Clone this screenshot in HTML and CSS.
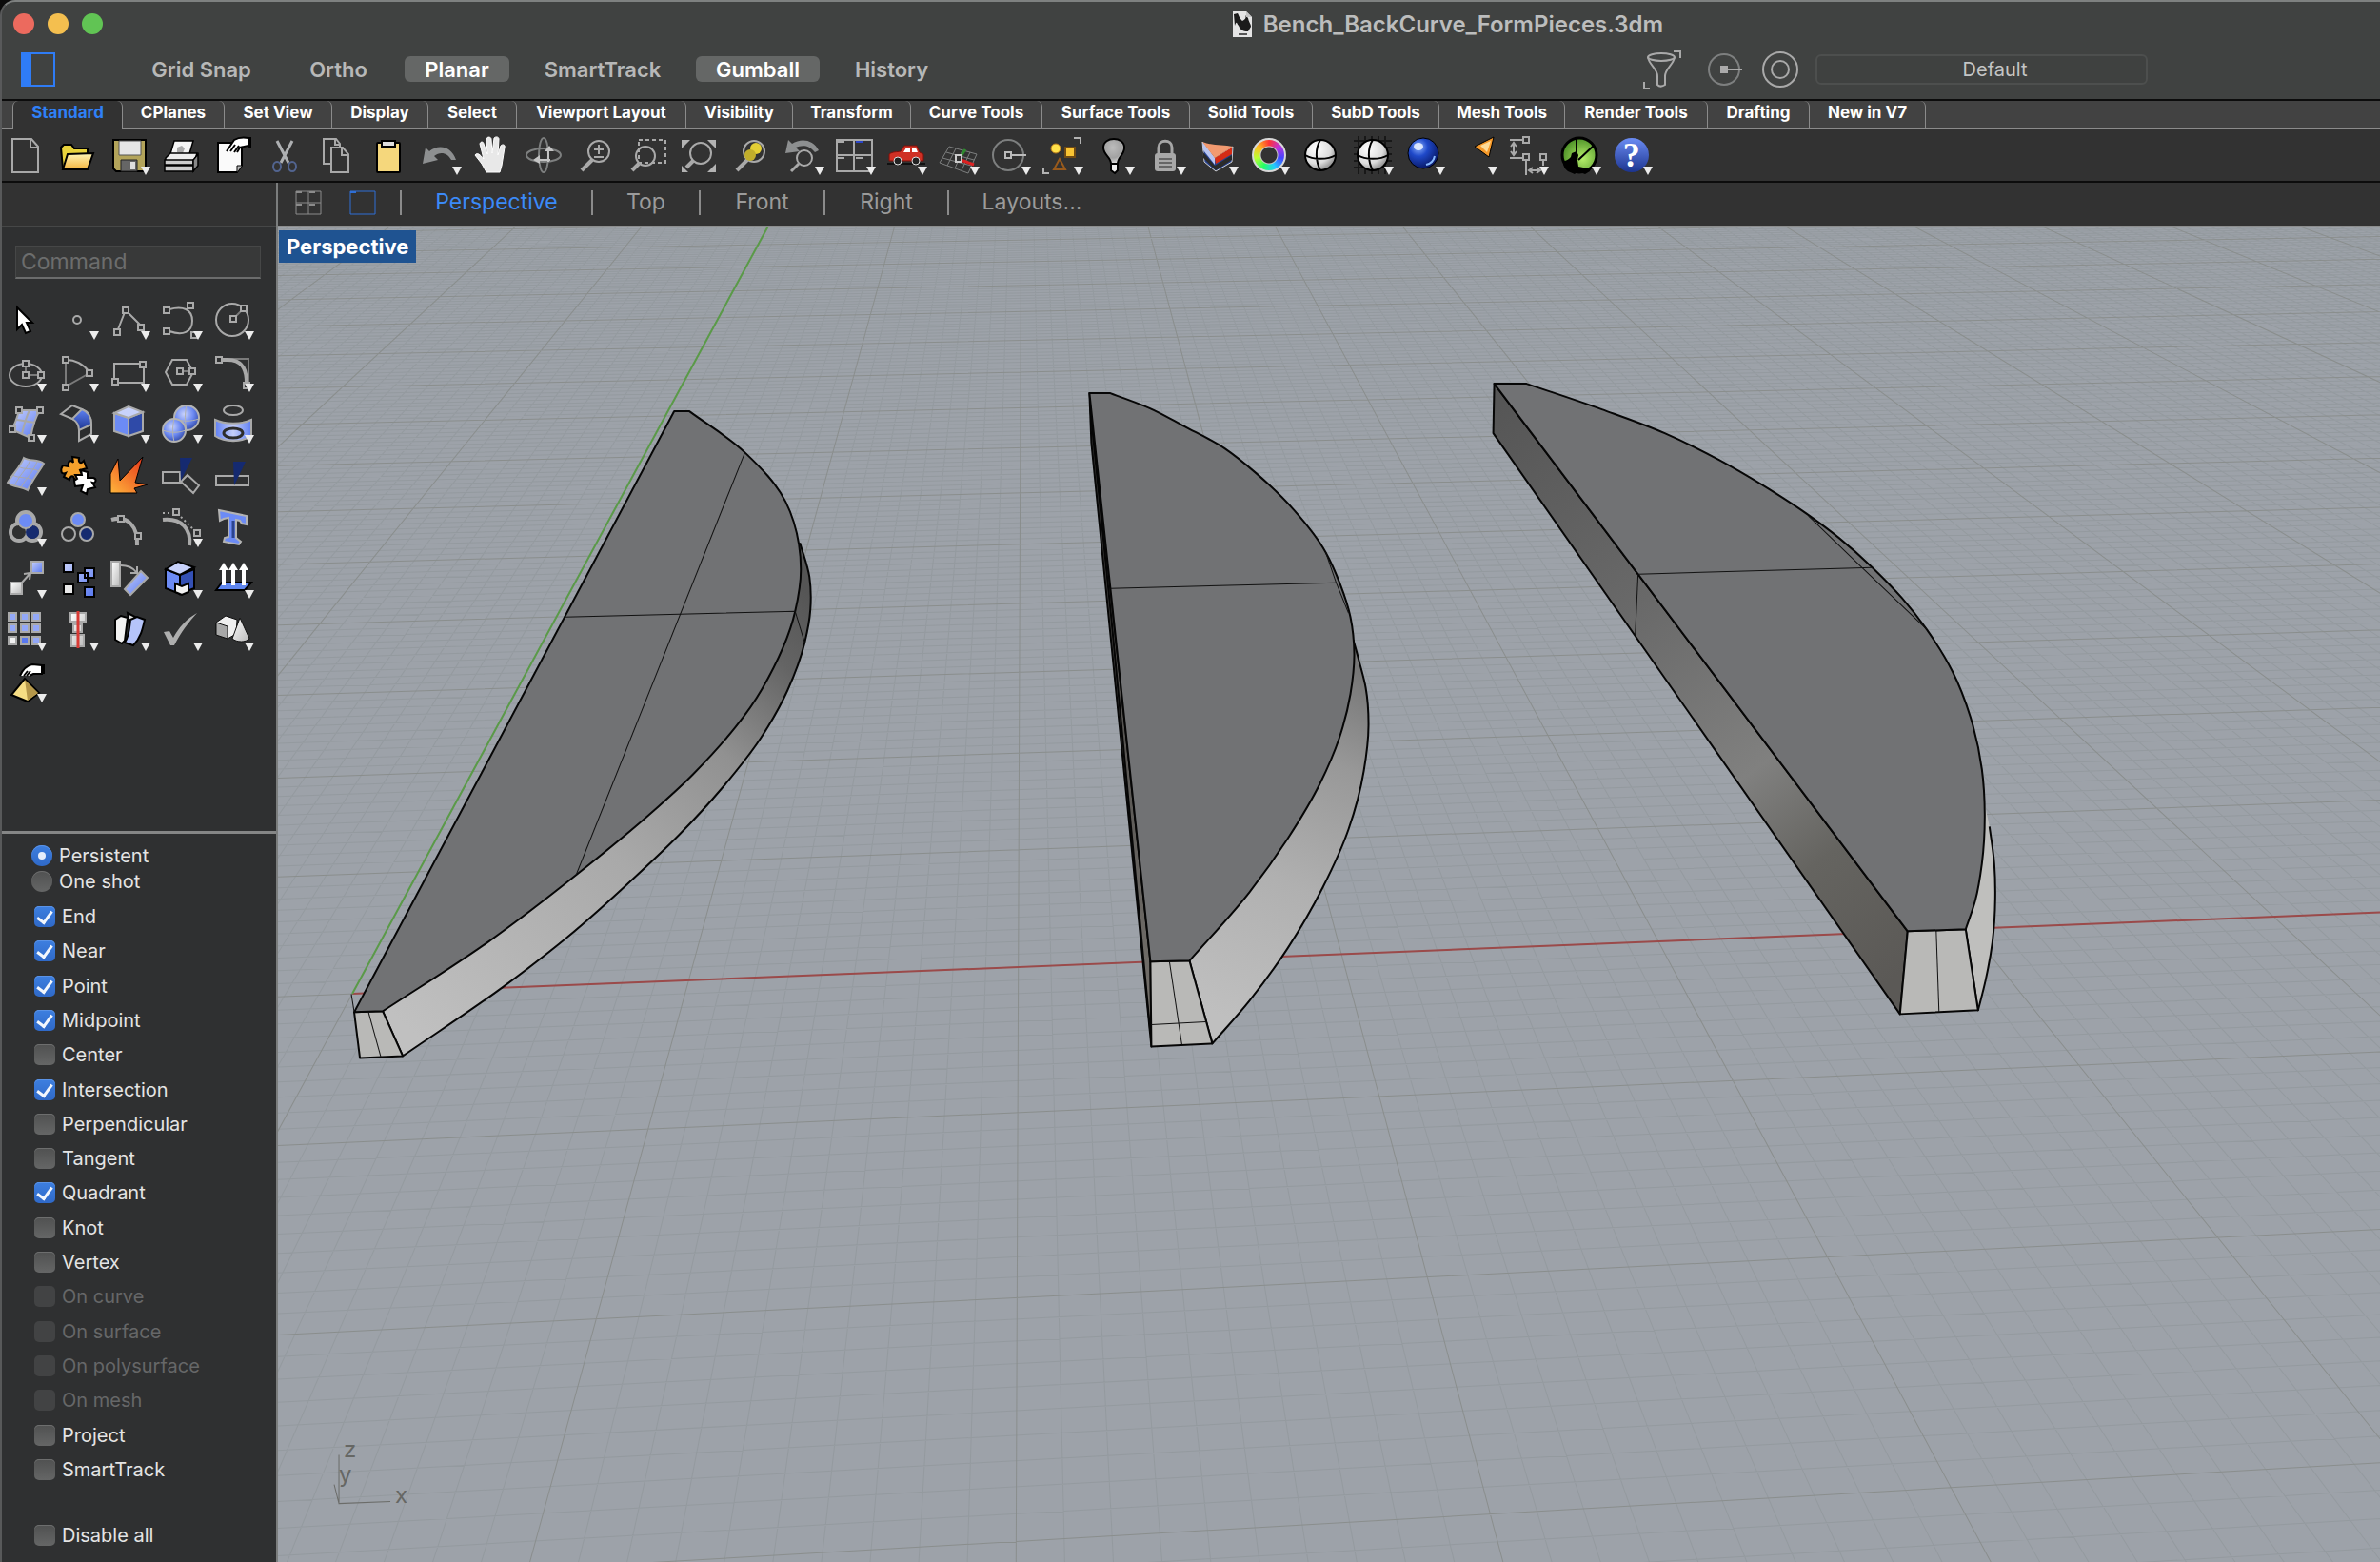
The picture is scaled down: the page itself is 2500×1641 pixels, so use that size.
FILE: index.html
```html
<!DOCTYPE html>
<html lang="en">
<head>
<meta charset="utf-8">
<title>Bench_BackCurve_FormPieces.3dm</title>
<link rel="stylesheet" href="styles.css">
</head>
<body>
<svg class="defs" aria-hidden="true">
  <defs>
    <linearGradient id="blue" x1="0" y1="0" x2="1" y2="1"><stop offset="0" stop-color="#c6d0fb"/><stop offset="1" stop-color="#5878f0"/></linearGradient>
    <linearGradient id="blueDown" x1="0" y1="0" x2="0" y2="1"><stop offset="0" stop-color="#5f82f4"/><stop offset="1" stop-color="#1c348f"/></linearGradient>
    <linearGradient id="blueSide" x1="0" y1="0" x2="1" y2="0"><stop offset="0" stop-color="#5f7ff3"/><stop offset=".5" stop-color="#c4cefa"/><stop offset="1" stop-color="#5f7ff3"/></linearGradient>
    <linearGradient id="metal" x1="0" y1="0" x2="1" y2="1"><stop offset="0" stop-color="#fff"/><stop offset="1" stop-color="#b9b9b9"/></linearGradient>
    <linearGradient id="fire" x1="1" y1="0" x2="0" y2="1"><stop offset="0" stop-color="#e52f18"/><stop offset="1" stop-color="#ffb53c"/></linearGradient>
    <linearGradient id="folder" x1="0" y1="0" x2="0" y2="1"><stop offset="0" stop-color="#fff6b8"/><stop offset="1" stop-color="#f2b33d"/></linearGradient>
    <radialGradient id="ball" cx=".35" cy=".3" r=".8"><stop offset="0" stop-color="#fff"/><stop offset=".6" stop-color="#dcdcdc"/><stop offset="1" stop-color="#777"/></radialGradient>
    <radialGradient id="bulb" cx=".45" cy=".35" r=".7"><stop offset="0" stop-color="#bdbdbd"/><stop offset=".6" stop-color="#a2a2a2"/><stop offset="1" stop-color="#ededed"/></radialGradient>
    <radialGradient id="blueBall" cx=".35" cy=".3" r=".75"><stop offset="0" stop-color="#8fb4ff"/><stop offset=".4" stop-color="#1f49c9"/><stop offset="1" stop-color="#06145e"/></radialGradient>
    <radialGradient id="softBall" cx=".4" cy=".35" r=".75"><stop offset="0" stop-color="#c9d3fc"/><stop offset=".5" stop-color="#6d8af2"/><stop offset="1" stop-color="#243a96"/></radialGradient>
    <radialGradient id="green" cx=".6" cy=".6" r=".6"><stop offset="0" stop-color="#b6ef6b"/><stop offset="1" stop-color="#4f9328"/></radialGradient>
    <g id="lens"><circle cx="23" cy="16" r="11"/><path d="M16 25 5 36" stroke-width="4"/></g>
  </defs>
</svg>

<div class="window">
  <header class="titlebar">
    <div class="lights"><button class="light close" aria-label="Close"></button><button class="light minimise" aria-label="Minimise"></button><button class="light zoom" aria-label="Zoom"></button></div>
    <h1 class="title">
      <svg class="doc" viewBox="0 0 20 27"><path d="M0 0h14l6 6v21H0z" fill="#e4e4e4"/><path d="M1 3l4-1c2 4 2 5 5 8 4-2 4-4 3-6l3 3c1 5 3 6 3 9l-3 5c-6 0-8-2-10-6C4 13 4 9 2 15z" fill="#1b1b1b"/><path d="M14 0v6h6" fill="#c4c4c4"/><path d="M6 24h9" stroke="#555" stroke-width="2"/></svg>
      Bench_BackCurve_FormPieces.3dm
    </h1>
  </header>

  <div class="modes">
    <button class="sidebar-toggle" aria-label="Toggle sidebar"><svg viewBox="0 0 36 36"><path d="M1 1h34v34H1z" fill="none" stroke="#2f7cf6" stroke-width="2"/><path d="M0 0h11v36H0z" fill="#2f7cf6"/></svg></button>
    <div class="mode-list">
      <button>Grid Snap</button><button>Ortho</button><button class="on">Planar</button><button>SmartTrack</button><button class="on">Gumball</button><button>History</button>
    </div>
    <div class="mode-right">
      <button class="filter" aria-label="Selection filter"><svg class="line" viewBox="0 0 42 42"><ellipse cx="20" cy="8" rx="14" ry="4"/><path d="M6 8c1 8 10 12 10 20v9c2 2 5 2 8 0v-9c0-8 9-12 10-20M33 2h7v7M2 34v7h6"/></svg></button>
      <button aria-label="Record history"><svg class="line dim" viewBox="0 0 42 42"><circle cx="20" cy="21" r="16"/><path d="M20 21h19" stroke="#aaa"/><path d="M16 17h8v8h-8z" fill="#aaa" stroke="none"/></svg></button>
      <button aria-label="Gumball alignment"><svg class="line" viewBox="0 0 42 42"><circle cx="21" cy="21" r="18"/><circle cx="21" cy="21" r="9"/></svg></button>
      <select aria-label="Layer"><option>Default</option></select>
    </div>
  </div>

  <nav class="tabs">
    <button class="active">Standard</button><button>CPlanes</button><button>Set View</button><button>Display</button><button>Select</button><button>Viewport Layout</button><button>Visibility</button><button>Transform</button><button>Curve Tools</button><button>Surface Tools</button><button>Solid Tools</button><button>SubD Tools</button><button>Mesh Tools</button><button>Render Tools</button><button>Drafting</button><button>New in V7</button>
  </nav>

  <div class="toolbar">
    <button aria-label="New"><svg class="line" viewBox="0 0 40 40"><path d="M6 3h20l7 8v27H6zM25 3v9h8"/></svg></button>
    <button aria-label="Open"><svg viewBox="0 0 40 40" stroke="#000" stroke-width="2"><path d="M2 12l3-3h8l3 4h14v5l-6 16H4z" fill="#e8d23c"/><path d="M9 19l27-1-6 17H4z" fill="url(#folder)"/></svg></button>
    <button class="m" aria-label="Save"><svg viewBox="0 0 40 40"><path d="M3 4h34v33H6l-3-3z" fill="#b3a45a" stroke="#000" stroke-width="2"/><path d="M9 5h23v15H9z" fill="#e6e6e6" stroke="#555"/><path d="M11 25h17v12H11z" fill="#666" stroke="#222"/><path d="M21 27h5v8h-5z" fill="#ddd"/></svg></button>
    <button aria-label="Print"><svg viewBox="0 0 40 40" stroke="#000" stroke-width="1.5"><path d="M13 5h20l-5 17H8z" fill="#f4f4f4"/><path d="M16 12l5-2 3 3-2 5-6-1z" fill="#aaa" stroke="none"/><path d="M4 23l5-5h28l-3 9H4z" fill="#eee"/><path d="M3 25h30v5H3zM3 31h30v6H3z" fill="#ccc"/><path d="M33 25l5-6v12l-5 6z" fill="#888"/></svg></button>
    <button aria-label="Properties"><svg viewBox="0 0 40 40"><path d="M4 7h25v24l-5 7H4z" fill="#fafafa" stroke="#000" stroke-width="2"/><path d="M24 38v-7h5" fill="#bbb" stroke="#000"/><path d="M13 16l8-12c5-3 9-3 15-2v8l-9 2-3 5" fill="#fff" stroke="#000" stroke-width="2"/><path d="M17 16l5-7M21 17l5-7" stroke="#000" stroke-width="2"/><path d="M35 1h4v11h-4z"/></svg></button>
    <button aria-label="Cut"><svg viewBox="0 0 40 40" fill="none"><path d="M12 5l12 23M28 5L16 28" stroke="#aeb0b2" stroke-width="3"/><g stroke="#52648f" stroke-width="2"><ellipse cx="12" cy="32" rx="4" ry="5"/><ellipse cx="28" cy="32" rx="4" ry="5"/></g></svg></button>
    <button aria-label="Copy"><svg class="line" viewBox="0 0 40 40"><path d="M14 29H6V3h13l4 5v4M18 3v6h5M14 12h12l6 7v19H14zM25 12v8h7"/></svg></button>
    <button aria-label="Paste"><svg viewBox="0 0 40 40" stroke="#000" stroke-width="2"><rect x="8" y="7" width="24" height="31" rx="1" fill="#f5d77c"/><path d="M13 5h14v6H13z" fill="#ddd"/></svg></button>
    <button class="m" aria-label="Undo"><svg viewBox="0 0 40 40"><path d="M2 29l3-17 4 4c9-8 23-6 28 9h-5c-4-8-12-9-18-4l4 4z" fill="#8d8f90"/></svg></button>
    <button aria-label="Pan"><svg viewBox="0 0 40 40"><path d="M14 38L9 29 2 20c2-3 5-1 9 4L7 8c1-3 4-2 4 0l4 11-1-16c1-3 5-2 5 0l1 15 2-16c2-2 5-1 5 1l-1 17 3-10c2-2 5-1 4 2l-3 19-2 7z" fill="#e8e8e8" stroke="#fff"/></svg></button>
    <button aria-label="Rotate view"><svg class="line dim" viewBox="0 0 40 40"><ellipse cx="20" cy="20" rx="5" ry="18"/><ellipse cx="20" cy="20" rx="18" ry="7"/><path d="M25 27V14M14 25h13" stroke="#c4c4c4"/><path d="M21 16l5-6 5 6zM16 20l-7 5 7 4z" fill="#c4c4c4" stroke="none"/></svg></button>
    <button aria-label="Zoom dynamic"><svg class="line" viewBox="0 0 40 40"><use href="#lens"/><path d="M18 14h10M23 9v10M18 22h10"/></svg></button>
    <button aria-label="Zoom window"><svg class="line" viewBox="0 0 40 40"><circle cx="18" cy="21" r="10"/><path d="M11 29l-7 7" stroke-width="4"/><path d="M11 4h28v24H11z" stroke-dasharray="4 3"/></svg></button>
    <button aria-label="Zoom extents"><svg class="line" viewBox="0 0 40 40"><circle cx="22" cy="18" r="11"/><path d="M14 26l-7 7" stroke-width="4"/><path d="M2 4h9l-9 9zM38 4h-9l9 9zM38 38h-9l9-9zM2 38v-7l7 7z" fill="#b3b3b3" stroke="none"/></svg></button>
    <button aria-label="Zoom selected"><svg class="line" viewBox="0 0 40 40"><use href="#lens"/><g fill="#e4cf35" stroke="none"><circle cx="25" cy="13" r="6"/><circle cx="19" cy="20" r="6" fill="#c1ae2b"/></g></svg></button>
    <button class="m" aria-label="Undo view"><svg class="line" viewBox="0 0 40 40"><path d="M2 18L5 4l4 4c9-6 22-5 28 7l-4 2C27 9 19 9 13 12l4 4z" fill="#8d8f90" stroke="none"/><circle cx="22" cy="23" r="8"/><path d="M16 29l-8 8" stroke-width="3"/></svg></button>
    <button class="m" aria-label="Four views"><svg class="line" viewBox="0 0 40 40"><path d="M1 4h37v33H1zM19 4v33M1 20h37" /><path d="M2 6h7M2 23h7M21 23h7" /><path d="M21 6h7" stroke="#2a45c8"/></svg></button>
    <button class="m" aria-label="Named views"><svg viewBox="0 0 40 40"><path d="M0 29h40" stroke="#111" stroke-width="2"/><path d="M2 26v-7c4-3 8-2 12-3l4-6h13l3 7 4 2v7z" fill="#cf3024" stroke="#7b110b"/><path d="M17 17l3-5h4v5zM26 12h4l2 5h-6z" fill="#fff"/><g fill="#222" stroke="#ddd"><circle cx="11" cy="26" r="4"/><circle cx="30" cy="26" r="4"/></g></svg></button>
    <button class="m" aria-label="Set CPlane"><svg class="line dim" viewBox="0 0 40 40"><path d="M10 11l29 8-9 20L0 28zM17 13L8 31M24 15l-8 19M32 17l-9 19M7 17l29 8M3 23l30 8" stroke-width="1"/><path d="M21 23l6-9" stroke="#2e8b2e" stroke-width="3"/><path d="M22 25l14 5" stroke="#d22" stroke-width="3"/><path d="M17 20h6v7h-6z" fill="#333" stroke="#ccc"/></svg></button>
    <button class="m" aria-label="Object snap"><svg class="line dim" viewBox="0 0 40 40"><circle cx="18" cy="20" r="16"/><path d="M15 17h6v6h-6zM21 20h16" stroke="#bbb"/></svg></button>
    <button class="m" aria-label="Select"><svg viewBox="0 0 40 40"><circle cx="14" cy="13" r="5" fill="#ffe14a" stroke="#b97c1c"/><path d="M24 12h10v10H24z" fill="#f9c433" stroke="#6f4a14" stroke-width="2"/><path d="M18 24l6 11H12z" fill="none" stroke="#995a1c" stroke-width="2"/><path d="M33 2h7v6M1 33v6h6" fill="none" stroke="#b3b3b3" stroke-width="2"/></svg></button>
    <button class="m" aria-label="Hide"><svg viewBox="0 0 40 40" stroke="#000" stroke-width="2"><path d="M17 29c0-7-8-9-8-17 0-12 22-12 22 0 0 8-7 10-7 17z" fill="url(#bulb)"/><path d="M17 29h7v7l-3 3-4-3z" fill="#eee"/></svg></button>
    <button class="m" aria-label="Lock"><svg viewBox="0 0 40 40"><path d="M13 19v-7c0-9 14-9 14 0v7" fill="none" stroke="#a6a6a6" stroke-width="3"/><rect x="9" y="18" width="22" height="19" rx="3" fill="#a8a8a8"/><path d="M13 24h14M13 28h14M13 32h14" stroke="#666" stroke-width="2"/></svg></button>
    <button class="m" aria-label="Layers"><svg viewBox="0 0 40 40"><path d="M4 6l13 18 19-13-1 16-17 10L6 27z" fill="#26418f" stroke="#cfcfcf"/><path d="M4 16l13 15 18-11v5L18 36 5 23z" fill="#2a2a2a"/><path d="M17 23l18-11v7L18 29z" fill="#d62c14"/><path d="M4 6l13 17v7L5 15z" fill="#b8c4f0"/><path d="M4 6c10 4 22 3 32 5L17 23z" fill="#f29a70"/></svg></button>
    <button class="m" aria-label="Object colours"><span class="wheel"></span></button>
    <button aria-label="Shade"><svg viewBox="0 0 40 40" stroke="#000" stroke-width="2"><circle cx="20" cy="20" r="16" fill="url(#ball)"/><path d="M20 4c-6 9-5 23 0 32M4 20c8 5 24 5 32 0" fill="none"/></svg></button>
    <button class="m" aria-label="Shaded viewport"><svg viewBox="0 0 40 40"><path d="M0 5h40M0 12h40M0 19h40M0 26h40M0 33h40M5 0v40M12 0v40M19 0v40M26 0v40M33 0v40" stroke="#181818" stroke-width="2"/><g stroke="#000" stroke-width="2"><circle cx="20" cy="20" r="16" fill="url(#ball)"/><path d="M20 4c-6 9-5 23 0 32M4 20c8 5 24 5 32 0" fill="none"/></g></svg></button>
    <button class="m" aria-label="Render"><svg viewBox="0 0 40 40"><circle cx="19" cy="18" r="16" fill="url(#blueBall)" stroke="#000"/><ellipse cx="14" cy="11" rx="5" ry="4" fill="#e4eeff" opacity=".9"/><path d="M22 30c5-1 8-4 9-9" stroke="#86b8ff" stroke-width="2" fill="none"/></svg></button>
    <button class="m" aria-label="Spotlight"><svg viewBox="0 0 40 40"><path d="M18 11l20-10-5 21z" fill="#f79a2a" stroke="#000"/><path d="M24 10l11-5-4 12z" fill="#ffdc98"/></svg></button>
    <button class="m" aria-label="Dimensions"><svg class="line" viewBox="0 0 40 40"><path d="M1 4h14M1 23h14M5 8v11M2 11l3-4 3 4M2 16l3 4 3-4M15 1h6v6h-6zM15 19h6v6h-6zM33 19h6v6h-6zM18 25v16M36 25v6M22 36h10M25 33l-4 3 4 3M29 33l4 3-4 3"/></svg></button>
    <button class="m" aria-label="Grasshopper"><svg viewBox="0 0 40 40"><circle cx="20" cy="20" r="18" fill="url(#green)" stroke="#000" stroke-width="3"/><path d="M3 26c4 0 6-2 8-4l1-4 5-2 2 4-1 5 1 7 10 2 4-3-2 6-5 3-8-3-3 3-7-3c-4-3-5-6-5-11z"/><path d="M17 2v18M35 10L19 25" stroke="#000" stroke-width="2"/></svg></button>
    <button class="m help" aria-label="Help">?</button>
  </div>

  <div class="body">
    <aside class="side">
      <div class="side-head"></div>
      <input class="command" type="text" placeholder="Command" aria-label="Command">
      <div class="tools">
        <button aria-label="Pointer"><svg viewBox="0 0 40 40"><path d="M11 7v23l5-5 4 9 5-2-4-9h6z" fill="#fff" stroke="#000" stroke-width="2"/></svg></button>
        <button class="m" aria-label="Point"><svg class="line" viewBox="0 0 40 40"><circle cx="19" cy="20" r="4"/></svg></button>
        <button class="m" aria-label="Polyline"><svg class="line" viewBox="0 0 40 40"><path d="M8 30l7-18M19 13l12 12M4 30h6v6H4zM13 7h6v6h-6zM29 25h6v6h-6z"/></svg></button>
        <button class="m" aria-label="Curve"><svg class="line" viewBox="0 0 40 40"><path d="M8 9c14-4 24 0 24 12S22 37 8 32M2 7h6v6H2zM2 29h6v6H2zM27 2h6v6h-6zM31 33h6v6h-6z"/></svg></button>
        <button class="m" aria-label="Circle"><svg class="line" viewBox="0 0 40 40"><circle cx="19" cy="20" r="17"/><path d="M22 17l6-6" class="faint"/><path d="M17 16h6v6h-6zM28 5h6v6h-6z" class="knob"/></svg></button>

        <button class="m" aria-label="Ellipse"><svg class="line" viewBox="0 0 40 40"><ellipse cx="20" cy="23" rx="17" ry="12"/><path d="M20 11v12h15" class="faint"/><path d="M17 8h6v6h-6zM17 20h6v6h-6zM33 20h6v6h-6z" class="knob"/></svg></button>
        <button class="m" aria-label="Arc"><svg class="line" viewBox="0 0 40 40"><path d="M7 8v27l25-14" class="faint"/><path d="M7 7c10 0 19 5 25 13"/><path d="M4 4h6v6H4zM4 33h6v6H4zM29 18h6v6h-6z" class="knob"/></svg></button>
        <button class="m" aria-label="Rectangle"><svg class="line" viewBox="0 0 40 40"><path d="M4 11h31v20H4z"/><path d="M31 9h6v6h-6zM2 27h6v6H2z" class="knob"/></svg></button>
        <button class="m" aria-label="Polygon"><svg class="line" viewBox="0 0 40 40"><path d="M11 7h15l7 13-7 13H11L4 20z"/><path d="M20 19h12" class="faint"/><path d="M16 16h6v6h-6zM29 16h6v6h-6z" class="knob"/></svg></button>
        <button class="m" aria-label="Fillet curves"><svg class="line" viewBox="0 0 40 40"><path d="M9 6h27v25" class="faint"/><path d="M8 7h6c14 0 20 8 20 24" stroke-width="4"/><path d="M2 4h6v6H2zM31 31h6v6h-6z" class="knob"/></svg></button>

        <button class="m" aria-label="Surface from points"><svg class="line" viewBox="0 0 40 40"><path d="M13 6h22c-6 9-8 18-10 29L5 26c4-5 6-12 8-20z" fill="url(#blue)"/><path d="M24 6c-4 8-6 16-8 25M10 16c7 0 14 3 20 3"/><path d="M10 3h6v6h-6zM32 3h6v6h-6zM3 23h6v6H3zM23 32h6v6h-6z" class="knob"/></svg></button>
        <button class="m" aria-label="Sweep"><svg class="line" viewBox="0 0 40 40"><path d="M2 10l12-9 10 4c8 3 10 9 10 17v9l-13 7V24c0-5-2-7-7-9z" fill="#2c2d2e"/><path d="M24 5c8 3 10 9 10 16l-13 6c0-6-2-9-7-12z" fill="url(#blueDown)"/></svg></button>
        <button class="m" aria-label="Box"><svg viewBox="0 0 40 40" stroke="#aaa" stroke-width="2"><path d="M4 9l15 5v19L4 28z" fill="#6c8bf5"/><path d="M19 14l15-6v20l-15 5z" fill="#2f4aa8"/><path d="M4 9l15-7 15 6-15 6z" fill="#c8d2fb"/></svg></button>
        <button class="m" aria-label="Boolean"><svg viewBox="0 0 40 40" stroke="#b3b3b3" stroke-width="2"><circle cx="26" cy="14" r="13" fill="url(#softBall)"/><circle cx="13" cy="27" r="12" fill="url(#softBall)"/><path d="M13 15c-2 8-2 16 0 24M1 27c8 3 16 3 24 0M26 1c-2 8-2 16 0 26M14 15c8 3 16 3 25 0" fill="none" stroke-width="1"/></svg></button>
        <button class="m" aria-label="Project curves"><svg class="line" viewBox="0 0 40 40"><ellipse cx="20" cy="6" rx="10" ry="5"/><path d="M1 16c10 5 28 5 38 0v17c-10 7-28 7-38 0z" fill="url(#blueSide)"/><ellipse cx="20" cy="30" rx="10" ry="5" stroke="#2c2c2c" stroke-width="3"/></svg></button>

        <button class="m" aria-label="Surface"><svg class="line" viewBox="0 0 40 40"><path d="M18 2c7 4 14 1 21 6-5 9-12 17-17 28C14 31 8 34 1 28 7 18 14 12 18 2z" fill="url(#blue)"/><path d="M25 4C20 16 13 20 8 32M32 6c-5 12-12 18-17 27M12 11c7 4 14 1 22 5M6 20c7 4 14 1 22 6" stroke-width="1"/></svg></button>
        <button aria-label="Join"><svg viewBox="0 0 40 40" stroke="#000" stroke-width="2"><path d="M4 10l6 1c-1-5 2-8 5-4l-1-6 7 1c-1 5 2 7 5 3l3 8-7 2 3 7-9 3c0-5-4-5-5 0l-6-3 2-4c-5 2-6-3-3-8z" fill="#f6a12c"/><path d="M17 20l7 0-1-5 7 2v6l6 0c4 1 3 6-1 5l3 5-8 2-1 5-6-3 2-6-8 1-1-6 3-2z" fill="#fff"/></svg></button>
        <button aria-label="Explode"><svg viewBox="0 0 40 40"><path d="M0 39V19L8 3l2 23L34 1l-8 27 13 2-14 4 3 5z" fill="url(#fire)" stroke="#000"/></svg></button>
        <button aria-label="Trim"><svg class="line" viewBox="0 0 40 40"><path d="M1 17h18v11H1zM27 20l12 11-6 8-13-12z"/><path d="M19 2h13L20 26z" fill="#152a70" stroke="none"/></svg></button>
        <button aria-label="Split"><svg class="line" viewBox="0 0 40 40"><path d="M2 21h34v10H2z"/><path d="M20 6h13L21 31z" fill="#152a70" stroke="none"/></svg></button>

        <button class="m" aria-label="Boolean union"><svg class="line" viewBox="0 0 40 40"><g stroke-width="4"><circle cx="13" cy="25" r="9"/><circle cx="27" cy="25" r="9"/><circle cx="20" cy="13" r="9"/></g><circle cx="13" cy="25" r="7" fill="#2f3031" stroke="none"/><circle cx="27" cy="25" r="7" fill="#162b70" stroke="none"/><circle cx="20" cy="13" r="8" fill="#6c8bf5"/></svg></button>
        <button aria-label="Group"><svg class="line" viewBox="0 0 40 40"><circle cx="20" cy="12" r="7" fill="#6c8bf5"/><circle cx="10" cy="27" r="7"/><circle cx="29" cy="27" r="7" fill="#162b70"/></svg></button>
        <button aria-label="Edit points"><svg class="line" viewBox="0 0 40 40"><path d="M1 12c18-5 28 8 27 27" stroke-width="4"/><path d="M8 8h6v6H8zM26 26h6v6h-6z" class="knob"/></svg></button>
        <button class="m" aria-label="Control points"><svg class="line" viewBox="0 0 40 40"><path d="M1 12c20-2 30 10 28 27" stroke-width="4"/><path d="M1 5h10M20 9l14 14M37 27v6" stroke-dasharray="2 3"/><path d="M12 1h6v6h-6zM34 23h6v6h-6z" class="knob"/></svg></button>
        <button aria-label="Text"><svg viewBox="0 0 40 40" stroke="#b3b3b3" stroke-width="2"><path d="M5 2l29 6v9l-5-1-2-3-4-1v19l5 4-2 3-16-3 1-4 4-1V10l-5 1-4 2z" fill="#6c8bf5"/><path d="M20 13v18" stroke="#2c448f" stroke-width="3"/></svg></button>

        <button class="m" aria-label="Move"><svg class="line" viewBox="0 0 40 40"><path d="M26 2h12v12H26z" fill="url(#blue)"/><path d="M4 24h12v12H4z" fill="url(#metal)"/><path d="M16 24l9-10M18 15l7-1-1 7"/></svg></button>
        <button aria-label="Copy objects"><svg viewBox="0 0 40 40" stroke="#000" stroke-width="2"><path d="M5 3h10v10H5zM27 9h10v10H27zM20 14h10v10H20zM27 29h10v10H27z" fill="url(#blue)"/><path d="M5 26h10v10H5z" fill="#e8e8e8"/></svg></button>
        <button aria-label="Rotate"><svg class="line" viewBox="0 0 40 40"><path d="M1 2h9v26H1z" fill="url(#metal)"/><path d="M32 12l7 7-18 18-6-6z" fill="url(#blue)"/><path d="M11 6c8 0 13 3 16 7M28 7v7h-7"/></svg></button>
        <button class="m" aria-label="Scale"><svg viewBox="0 0 40 40" stroke="#000" stroke-width="2"><path d="M4 10l15 6v20L4 30z" fill="#6c8bf5"/><path d="M19 16l15-6v20l-15 6z" fill="#3450b5"/><path d="M4 10l13-8 17 6-15 8z" fill="#c8d2fb"/><path d="M14 25l7 3 7-3v9l-7 3-7-3z" fill="#f2f2f2"/></svg></button>
        <button class="m" aria-label="Project to CPlane"><svg viewBox="0 0 40 40"><path d="M8 24h31l-7 8H2z" fill="#5f86ef" stroke="#000" stroke-width="2"/><g stroke="#fff" stroke-width="4"><path d="M10 27V9M20 27V9M31 27V9"/></g><path d="M5 11l5-8 5 8zM15 11l5-8 5 8zM26 11l5-8 5 8z" fill="#fff"/></svg></button>

        <button class="m" aria-label="Array"><svg class="line" viewBox="0 0 40 40"><path d="M2 2h8v8H2zM15 2h8v8h-8zM27 2h8v8h-8zM2 14h8v8H2zM15 14h8v8h-8zM27 14h8v8h-8zM27 27h8v8h-8z" fill="#93a8f8"/><path d="M15 27h8v8h-8z" fill="#5878f0"/><path d="M2 27h8v8H2z" fill="#f2f2f2"/></svg></button>
        <button class="m" aria-label="Align"><svg viewBox="0 0 40 40" stroke="#aaa" stroke-width="2"><path d="M12 2h16v9H12zM15 14h9v8h-9zM13 25h13v12H13z" fill="url(#metal)"/><path d="M20 0v39" stroke="#d83a35" stroke-width="3"/></svg></button>
        <button class="m" aria-label="Bend"><svg viewBox="0 0 40 40" stroke="#000" stroke-width="2"><path d="M5 9l6-4 7 2-3 24-3 3-7-4z" fill="#f2f2f2"/><path d="M18 2l8 4-6 8z" fill="#ddd"/><path d="M21 9l7-3 8 3c-2 9-4 19-12 27l-9-3c5-7 5-16 6-24z" fill="#b5c4fa"/></svg></button>
        <button class="m" aria-label="Check"><svg viewBox="0 0 40 40"><path d="M2 22l6-1 4 7C18 17 26 8 37 2 28 12 20 22 13 36H9z" fill="#aeaeae"/></svg></button>
        <button class="m" aria-label="Solids"><svg viewBox="0 0 40 40" stroke="#111"><path d="M2 12l10-7 12 4-1 15-9 5-12-4z" fill="#f0f0f0"/><path d="M2 12l12 4v13L2 25z" fill="#a8a8a8"/><path d="M27 7l10 22c-4 4-13 4-18 0z" fill="url(#metal)"/></svg></button>

        <button class="m" aria-label="Inspect"><svg viewBox="0 0 40 40"><path d="M14 13c3-7 8-11 13-12l10 1v9h-9l-4 2M18 13l4-5M21 13l4-5" fill="#fff" stroke="#000" stroke-width="2"/><path d="M36 1h4v10h-4z"/><path d="M19 16l15 15-12 9-17-7z" fill="#f6dd84" stroke="#000" stroke-width="2"/><path d="M19 17l3 22 11-8z" fill="#b5974a"/></svg></button>
      </div>

      <form class="snaps">
        <div class="persist">
          <label><input type="radio" name="life" checked>Persistent</label>
          <label><input type="radio" name="life">One shot</label>
        </div>
        <div class="checks">
          <label><input type="checkbox" checked>End</label>
          <label><input type="checkbox" checked>Near</label>
          <label><input type="checkbox" checked>Point</label>
          <label><input type="checkbox" checked>Midpoint</label>
          <label><input type="checkbox">Center</label>
          <label><input type="checkbox" checked>Intersection</label>
          <label><input type="checkbox">Perpendicular</label>
          <label><input type="checkbox">Tangent</label>
          <label><input type="checkbox" checked>Quadrant</label>
          <label><input type="checkbox">Knot</label>
          <label><input type="checkbox">Vertex</label>
          <label class="off"><input type="checkbox" disabled>On curve</label>
          <label class="off"><input type="checkbox" disabled>On surface</label>
          <label class="off"><input type="checkbox" disabled>On polysurface</label>
          <label class="off"><input type="checkbox" disabled>On mesh</label>
          <label><input type="checkbox">Project</label>
          <label><input type="checkbox">SmartTrack</label>
        </div>
        <label class="disable"><input type="checkbox">Disable all</label>
      </form>
    </aside>

    <main class="view">
      <div class="viewbar">
        <button class="vicon" aria-label="Four viewports"><svg viewBox="0 0 28 26" fill="none" stroke="#8b8b8b"><path d="M1 1h26v24H1zM14 1v24M1 13h26"/><path d="M1 2h6M15 2h6M1 15h6M15 15h6" stroke-width="2"/></svg></button>
        <button class="vicon" aria-label="Single viewport"><svg viewBox="0 0 28 26" fill="none" stroke="#2f6fd6"><path d="M1 1h26v24H1z"/><path d="M1 2h6" stroke-width="2"/></svg></button>
        <button class="vtab active">Perspective</button>
        <button class="vtab">Top</button>
        <button class="vtab">Front</button>
        <button class="vtab">Right</button>
        <button class="vtab">Layouts...</button>
      </div>
      <div class="canvas">
        <span class="tag">Perspective</span>
        <svg id="scene" viewBox="293 239 2207 1402" preserveAspectRatio="xMinYMin slice">
          <defs>
            <linearGradient id="side1" gradientUnits="userSpaceOnUse" x1="850" y1="620" x2="430" y2="1080"><stop offset="0" stop-color="#555"/><stop offset=".12" stop-color="#646464"/><stop offset=".3" stop-color="#919191"/><stop offset=".55" stop-color="#a9a9a9"/><stop offset="1" stop-color="#c0c0c0"/></linearGradient>
            <linearGradient id="side2" gradientUnits="userSpaceOnUse" x1="1436" y1="710" x2="1270" y2="1060"><stop offset="0" stop-color="#777"/><stop offset=".25" stop-color="#989898"/><stop offset=".6" stop-color="#b0b0b0"/><stop offset="1" stop-color="#bfbfbf"/></linearGradient>
            <linearGradient id="side3" gradientUnits="userSpaceOnUse" x1="1570" y1="430" x2="2000" y2="1020"><stop offset="0" stop-color="#565656"/><stop offset=".35" stop-color="#696969"/><stop offset=".64" stop-color="#80807f"/><stop offset=".8" stop-color="#656460"/><stop offset="1" stop-color="#5b5956"/></linearGradient>
            <linearGradient id="side2l" x1="0" y1="0" x2="0" y2="1"><stop offset="0" stop-color="#333"/><stop offset="1" stop-color="#77736e"/></linearGradient>
          </defs>
          <g id="grid"></g>
          <g id="solids"></g>
          <g class="triad"><path d="M357 1528v51l54-2M352 1559l5 20"/><text x="362" y="1530">z</text><text x="357" y="1556">y</text><text x="416" y="1578">x</text></g>
        </svg>
      </div>
    </main>
  </div>
</div>
<script src="scene.js"></script>
</body>
</html>
```
FILE: styles.css
```css
* { box-sizing: border-box; }
html, body { height: 100%; }
body { margin: 0; background: #0b0b0b; font-family: Inter, "Liberation Sans", sans-serif; overflow: hidden; }
button { background: none; border: 0; padding: 0; margin: 0; font: inherit; color: inherit; display: flex; align-items: center; justify-content: center; position: relative; }
.defs { position: absolute; width: 0; height: 0; }

.window { height: 100%; display: flex; flex-direction: column; background: linear-gradient(#404241 104px, #323232 104px); border-top: 2px solid #7e8180; border-left: 2px solid #58595a; border-top-left-radius: 16px; overflow: hidden; }

.titlebar { height: 46px; display: flex; align-items: center; flex: none; }
.lights { display: flex; gap: 14px; padding-left: 12px; }
.light { width: 22px; height: 22px; border-radius: 50%; }
.close { background: #ec6a5e; }
.minimise { background: #f4bf4f; }
.zoom { background: #61c454; }
.title { flex: 1; display: flex; align-items: center; justify-content: center; gap: 12px; margin: 0; padding-left: 434px; font-size: 24px; font-weight: 600; color: #bcbdbd; }
.doc { width: 20px; height: 27px; }

.modes { height: 56px; flex: none; display: flex; align-items: center; padding: 0 244px 7px 20px; }
.sidebar-toggle svg { width: 36px; height: 36px; display: block; }
.mode-list { display: grid; grid-template-columns: 149px 103px 110px 160px 130px 115px; gap: 18px; margin-left: 79px; font-size: 22px; font-weight: 600; color: #b7b8b8; }
.mode-list button { height: 27px; border-radius: 6px; }
.mode-list .on { background: #656766; color: #fff; }
.mode-right { margin-left: auto; display: flex; align-items: center; gap: 16px; }
.mode-right svg { width: 42px; height: 42px; display: block; }
.mode-right .filter { margin-right: 8px; }
.mode-right select { appearance: none; width: 349px; height: 32px; border: 2px solid #4d4f4e; border-radius: 6px; background: #3f4140; color: #c4c5c5; font: 400 20px Inter, "Liberation Sans", sans-serif; text-align: center; text-align-last: center; padding: 0 0 0 28px; }

.line { fill: none; stroke: #a9a9a9; stroke-width: 2; }
.line.dim { stroke: #7d7f7f; }
.faint { stroke: #7a7a7a; }
.knob { fill: #2f3031; }

.tabs { flex: none; height: 31px; display: grid; grid-template-columns: 116px 107px 113px 101px 93px 178px 112px 124px 138px 155px 129px 133px 132px 150px 107px 122px; padding-left: 11px; border-top: 2px solid #0c0c0c; background: #424242; box-shadow: inset 0 -1px #8b8b8b; font-size: 17px; font-weight: 700; color: #fff; }
.tabs button { border-right: 1px solid #8b8b8b; border-top-right-radius: 6px; padding-bottom: 6px; white-space: nowrap; }
.tabs .active { background: #323232; color: #2f80f7; border-left: 1px solid #8b8b8b; border-top-left-radius: 6px; }

.toolbar { flex: none; height: 55px; display: grid; grid-template-columns: repeat(32, 1fr); width: 1741px; margin-left: -2px; }
.toolbar svg, .tools svg { width: 40px; height: 40px; overflow: visible; }
.m::after { content: ""; position: absolute; right: 5px; bottom: 6px; border: 5px solid transparent; border-top: 9px solid #ececec; border-bottom: 0; }
.wheel { width: 36px; height: 36px; border: 2px solid #d8d8d8; border-radius: 50%; background: radial-gradient(circle, #323232 8px, #ccc 9px, transparent 10px), conic-gradient(#f33, #b3d, #44f, #2cf, #2f6, #bf3, #fb2, #f33); }
.help { color: #fff; font: 700 36px "Liberation Serif", serif; isolation: isolate; }
.help::before { content: ""; position: absolute; z-index: -1; width: 36px; height: 36px; border-radius: 50%; background: linear-gradient(#6b8cf3, #1c348f); }

.body { flex: 1; display: flex; min-height: 0; border-top: 2px solid #0c0c0c; }
.side { width: 288px; flex: none; background: #2f3031; display: flex; flex-direction: column; }
.side-head { height: 47px; background: #323232; border-bottom: 2px solid #464747; flex: none; }
.command { margin: 19px 14px 0; width: 258px; height: 35px; flex: none; background: #383939; border: 1px solid #464747; border-bottom: 2px solid #6b6c6c; padding: 0 5px; font: 400 23px Inter, "Liberation Sans", sans-serif; color: #eee; }
.command::placeholder { color: #6c6d6d; opacity: 1; }
.tools { margin: 16px 0 0 -2px; width: 272px; height: 435px; flex: none; display: grid; grid-template: repeat(8, 1fr) / repeat(5, 1fr); }

.snaps { margin-top: 129px; border-top: 3px solid #858686; padding: 9px 0 0 34px; font-size: 20px; color: #e4e4e4; display: flex; flex-direction: column; flex: none; }
.snaps label { display: flex; align-items: center; gap: 7px; }
.snaps .off { color: #666768; }
.persist { margin-left: -3px; height: 60px; }
.persist label { height: 27px; }
.checks { display: grid; grid-template-rows: repeat(17, 1fr); height: 617px; }
.disable { height: 36px; margin-top: 33px; }
.snaps input { appearance: none; margin: 0; width: 22px; height: 22px; border-radius: 5px; background: linear-gradient(#505151, #656666); box-shadow: inset 0 1px #6d6e6e; display: grid; place-items: center; }
.snaps input[type="radio"] { border-radius: 50%; }
.snaps input:checked { background: linear-gradient(#3d7fe0, #2f69c8); box-shadow: inset 0 1px #5b93e6; }
.snaps input:disabled { background: #424344; box-shadow: none; }
.snaps input[type="radio"]:checked::after { content: ""; width: 8px; height: 8px; border-radius: 50%; background: #e6eefb; }
.snaps input[type="checkbox"]:checked::after { content: ""; width: 7px; height: 13px; border: solid #f3f7fd; border-width: 0 3px 3px 0; transform: translateY(-1px) rotate(36deg); }

.view { flex: 1; min-width: 0; display: flex; flex-direction: column; border-left: 2px solid #7b7d7d; background: #323232; }
.viewbar { height: 47px; flex: none; border-bottom: 2px solid #8d8e8e; display: flex; align-items: center; padding: 0 0 4px 18px; font-size: 23px; color: #9b9b9b; }
.vicon { width: 28px; margin-right: 29px; }
.vicon svg { width: 28px; height: 26px; }
.vicon + .vicon { margin-right: 25px; }
.vtab { height: 26px; padding-bottom: 2px; border-left: 2px solid #8b8b8b; }
.vtab:nth-child(3) { width: 201px; }
.vtab:nth-child(4) { width: 113px; }
.vtab:nth-child(5) { width: 131px; }
.vtab:nth-child(6) { width: 130px; }
.vtab:nth-child(7) { width: 176px; }
.vtab.active { color: #3b8af8; }
.canvas { flex: 1; min-height: 0; position: relative; background: #9da2a9; }
#scene { display: block; width: 100%; height: 100%; }
.tag { position: absolute; left: 1px; top: 3px; background: #1f5391; color: #fff; font-size: 22px; font-weight: 700; line-height: 34px; padding: 0 8px; }

.minor { stroke: #949a9f; stroke-width: 1; fill: none; }
.major { stroke: #8a8e8d; stroke-width: 1; fill: none; }
.xaxis { stroke: #9b4a4a; stroke-width: 2; }
.yaxis { stroke: #5a9a48; stroke-width: 2; }
.edge { fill: none; stroke: #060606; stroke-width: 2; stroke-linejoin: round; }
.iso { fill: none; stroke: #111; stroke-width: 1; }
.triad { fill: #666764; font-size: 24px; }
.triad path { fill: none; stroke: #6b6c69; }
```
FILE: scene.js
```js
// Ground plane projection: origin, and the vanishing points of both axes.
const O = [371, 1043.7], VX = [35361, -361], VY = [1075.2, -256.4];
const A = 0.010197, B = 0.10941;
const project = (i, j) => {
  const w = 1 + i * A + j * B;
  return [0, 1].map(k => ((O[k] + i * A * VX[k] + j * B * VY[k]) / w).toFixed(1));
};
const segment = (a, b) => `M${project(...a)}L${project(...b)}`;
const path = (cls, d, fill) => `<path class="${cls}" d="${d}"${fill ? ` fill="${fill}"` : ''}/>`;

const I0 = -6, I1 = 17, J0 = -5, J1 = 17;
let minor = '', major = '';
for (let n = I0 * 10; n <= I1 * 10; n++) {
  const s = segment([n / 10, J0], [n / 10, J1]);
  if (n % 10) minor += s; else major += s;
}
for (let n = J0 * 10; n <= J1 * 10; n++) {
  const s = segment([I0, n / 10], [I1, n / 10]);
  if (n % 10) minor += s; else major += s;
}
document.getElementById('grid').innerHTML =
  path('minor', minor) + path('major', major) +
  path('xaxis', segment([0, 0], [I1, 0])) + path('yaxis', segment([0, 0], [0, J1]));

// Smooth curve through points, continuing from the first one.
// Tangents are weighted by chord length so uneven spacing leaves no kinks.
function curve(p) {
  const dist = (a, b) => Math.hypot(b[0] - a[0], b[1] - a[1]);
  const unit = (a, b) => [0, 1].map(k => (b[k] - a[k]) / dist(a, b));
  const tangent = i => {
    if (i === 0) return unit(p[0], p[1]);
    if (i === p.length - 1) return unit(p[i - 1], p[i]);
    const d0 = dist(p[i - 1], p[i]), d1 = dist(p[i], p[i + 1]);
    const u = unit(p[i - 1], p[i]), v = unit(p[i], p[i + 1]);
    return [0, 1].map(k => (d1 * u[k] + d0 * v[k]) / (d0 + d1));
  };
  let d = '';
  for (let i = 0; i < p.length - 1; i++) {
    const s = dist(p[i], p[i + 1]) / 3, t0 = tangent(i), t1 = tangent(i + 1);
    const c0 = [0, 1].map(k => (p[i][k] + s * t0[k]).toFixed(1));
    const c1 = [0, 1].map(k => (p[i + 1][k] - s * t1[k]).toFixed(1));
    d += `C${c0} ${c1} ${p[i + 1]}`;
  }
  return d;
}
const poly = p => 'M' + p.join('L');

const TOP = '#717274', END = '#b9b9b7';
const pieces = [
  {
    start: [709, 432], bend: [[725, 432], [783, 475], [826, 527], [840, 572], [842, 598], [836, 642], [801, 724], [729, 813], [688, 851], [606, 919], [514, 989], [403, 1062]], corner: [373, 1063],
    low: [[424, 1109], [530, 1036], [596, 985], [668, 921], [714, 877], [759, 828], [800, 775], [828, 725], [846, 675], [852, 640], [851, 606], [841, 570]],
    inner: [[836, 642], [606, 919]], side: 'url(#side1)', end: [[373, 1063], [403, 1062], [424, 1109], [379, 1111]],
    iso: [[[594, 648], [836, 642], [846, 675]], [[783, 476], [606, 919]], [[388, 1063], [401, 1110]], [[370, 1044], [373, 1063]]]
  },
  {
    start: [1145, 413], bend: [[1167, 413], [1213, 431], [1243, 447], [1287, 471], [1320, 497], [1360, 536], [1393, 580], [1408, 613], [1419, 648], [1423, 687], [1419, 729], [1407, 776], [1387, 823], [1353, 881], [1313, 937], [1250, 1009]], corner: [1209, 1010],
    low: [[1274, 1096], [1313, 1051], [1353, 996], [1390, 932], [1417, 871], [1433, 810], [1438, 762], [1435, 722], [1428, 694], [1422, 672]],
    inner: [[1418, 700], [1387, 823]], side: 'url(#side2)', end: [[1209, 1010], [1250, 1009], [1274, 1096], [1210, 1099]],
    left: [[1145, 413], [1209, 1010], [1210, 1099], [1147, 465]], leftFill: 'url(#side2l)', seam: [[1146, 430], [1168, 650], [1209, 1085]],
    iso: [[[1167, 618], [1404, 612]], [[1393, 580], [1404, 612], [1417, 644]], [[1229, 1010], [1242, 1097]], [[1210, 1076], [1267, 1073]]]
  },
  {
    start: [1570, 403], bend: [[1604, 403], [1683, 430], [1749, 455], [1806, 483], [1859, 514], [1900, 541], [1932, 565], [1967, 596], [1998, 628], [2024, 661], [2051, 705], [2070, 753], [2082, 808], [2085, 855], [2082, 907], [2075, 946], [2065, 976]], corner: [2004, 978],
    low: [[2078, 1061], [2086, 1029], [2093, 990], [2096, 944], [2095, 907], [2090, 868]],
    inner: [[2084, 840], [2070, 930]], side: '#bfbfbd', end: [[2004, 978], [2065, 976], [2078, 1061], [1996, 1065]],
    left: [[1570, 403], [2004, 978], [1996, 1065], [1569, 455]], leftFill: 'url(#side3)',
    iso: [[[1721, 603], [1967, 596]], [[1721, 603], [1718, 667]], [[1900, 542], [1957, 597], [2024, 661]], [[2034, 977], [2037, 1063]]]
  }
];

document.getElementById('solids').innerHTML = pieces.map(s => {
  const topEnd = s.bend[s.bend.length - 1];
  // The bevelled side lies behind the top face, which covers its inner part.
  const side = `M${s.low[0]}${curve(s.low)}L${s.inner.join('L')}L${topEnd}Z`;
  const top = `M${s.start}L${s.bend[0]}${curve(s.bend)}L${s.corner}Z`;
  let out = path('', side, s.side) + path('edge', `M${topEnd}L${s.low[0]}${curve(s.low)}`);
  if (s.left) out += path('', poly(s.left) + 'Z', s.leftFill) + path('edge', poly(s.left) + 'Z');
  if (s.seam) out += path('edge', poly(s.seam));
  out += path('', poly(s.end) + 'Z', END) + path('edge', poly(s.end) + 'Z');
  out += path('', top, TOP) + path('edge', top);
  return out + s.iso.map(l => path('iso', poly(l))).join('');
}).join('');
```
